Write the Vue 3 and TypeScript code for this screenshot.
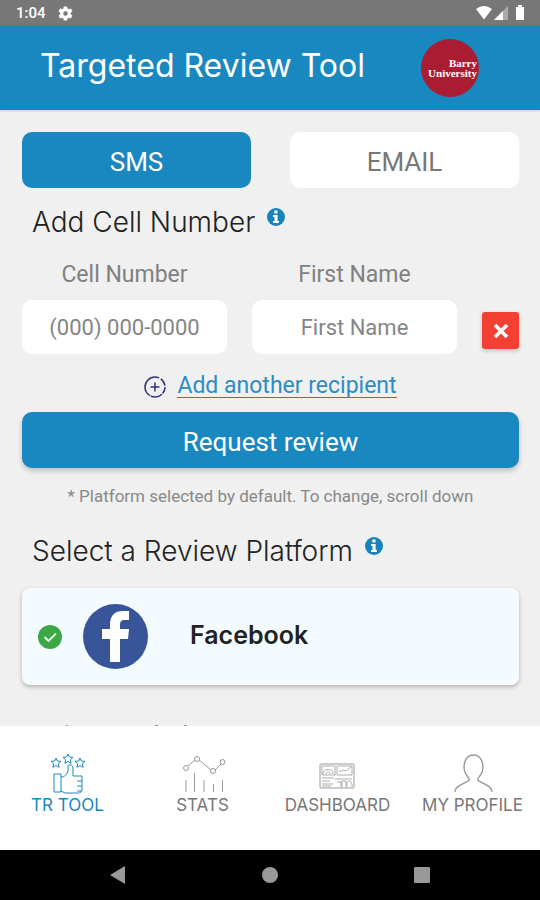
<script setup lang="ts">
import { ref } from 'vue'

interface Recipient {
  id: number
  phone: string
  name: string
}

type Channel = 'SMS' | 'EMAIL'
type Icon = 'tool' | 'stats' | 'dashboard' | 'profile'

const channels: Channel[] = ['SMS', 'EMAIL']
const channel = ref<Channel>('SMS')
const platform = ref('facebook')
const recipients = ref<Recipient[]>([{ id: 1, phone: '', name: '' }])
let nextId = 2

const links: { label: string; icon: Icon; active: boolean }[] = [
  { label: 'TR TOOL', icon: 'tool', active: true },
  { label: 'STATS', icon: 'stats', active: false },
  { label: 'DASHBOARD', icon: 'dashboard', active: false },
  { label: 'MY PROFILE', icon: 'profile', active: false },
]

function addRecipient(): void {
  recipients.value.push({ id: nextId++, phone: '', name: '' })
}

function removeRecipient(id: number): void {
  recipients.value = recipients.value.filter((r) => r.id !== id)
}
</script>

<template>
  <div class="app">
    <div class="status">
      <span class="clock">1:04</span>
      <svg class="gear" viewBox="0 0 24 24" width="17" height="17">
        <path fill="#fff" fill-rule="evenodd" d="M19.4 13a7.500 7.500 0 0 0 0-2l2.200-1.700a.5.5 0 0 0 .1-.6l-2-3.500a.5.5 0 0 0-.6-.2l-2.600 1a8 8 0 0 0-1.700-1L14.400 2.400a.5.5 0 0 0-.5-.4h-4a.5.5 0 0 0-.5.4L9 5a8 8 0 0 0-1.700 1l-2.500-1a.5.5 0 0 0-.6.200l-2 3.500a.5.5 0 0 0 .1.600L4.500 11a8 8 0 0 0 0 2l-2.200 1.700a.5.5 0 0 0-.1.600l2 3.500c.1.200.4.300.6.200l2.500-1a8 8 0 0 0 1.700 1l.4 2.600c0 .2.200.4.500.4h4c.3 0 .5-.2.500-.4l.4-2.600a8 8 0 0 0 1.700-1l2.500 1c.2.100.5 0 .6-.2l2-3.500a.5.5 0 0 0-.1-.6zM12 15.200a3.200 3.200 0 1 1 0-6.400 3.200 3.200 0 0 1 0 6.400z" />
      </svg>
      <svg class="signals" viewBox="0 0 50 18" width="50" height="18">
        <path fill="#fff" d="M0 5Q8-1 16 5L8 15.500z" />
        <path fill="#aaa" d="M32 2v14H18z" />
        <path fill="#fff" d="M27 7v9h-9z" />
        <path fill="#fff" d="M40 3h2V1h4v2h2v13h-8z" />
      </svg>
    </div>

    <header class="header">
      <h1>Targeted Review Tool</h1>
      <div class="brand"><span>Barry</span><span>University</span></div>
    </header>

    <main class="content">
      <div class="channels">
        <button
          v-for="c in channels"
          :key="c"
          type="button"
          class="channel"
          :class="{ selected: channel === c }"
          @click="channel = c"
        >{{ c }}</button>
      </div>

      <h2>
        Add Cell Number
        <svg class="info" viewBox="0 0 18 18" width="18" height="18">
          <circle cx="9" cy="9" r="9" fill="#1782bb" />
          <path fill="#fff" d="M7.300 2.600h3.200v3H7.300zM6 7h4.600v6H12v2H6v-2h1.500V9H6z" />
        </svg>
      </h2>

      <div v-for="r in recipients" :key="r.id" class="recipient">
        <div class="field">
          <label :for="`phone-${r.id}`">Cell Number</label>
          <input :id="`phone-${r.id}`" v-model="r.phone" type="tel" placeholder="(000) 000-0000" />
        </div>
        <div class="field">
          <label :for="`name-${r.id}`">First Name</label>
          <input :id="`name-${r.id}`" v-model="r.name" type="text" placeholder="First Name" />
        </div>
        <button type="button" class="remove" aria-label="Remove recipient" @click="removeRecipient(r.id)">
          <svg viewBox="0 0 16 16" width="16" height="16">
            <path d="M2 2l12 12M14 2L2 14" stroke="#fff" stroke-width="3.600" />
          </svg>
        </button>
      </div>

      <div class="add">
        <svg viewBox="0 0 22 22" width="22" height="22" fill="none" stroke="#2b3575">
          <circle cx="11" cy="11" r="10" stroke-width="1.500" stroke-dasharray="7 1 12 1 30 2 8 2" />
          <path d="M11 6.500v9M6.500 11h9" stroke-width="1.500" />
        </svg>
        <a href="#" @click.prevent="addRecipient">Add another recipient</a>
      </div>

      <button type="button" class="request">Request review</button>
      <p class="note">* Platform selected by default. To change, scroll down</p>

      <h2>
        Select a Review Platform
        <svg class="info" viewBox="0 0 18 18" width="18" height="18">
          <circle cx="9" cy="9" r="9" fill="#1782bb" />
          <path fill="#fff" d="M7.300 2.600h3.200v3H7.300zM6 7h4.600v6H12v2H6v-2h1.500V9H6z" />
        </svg>
      </h2>

      <label class="platform">
        <input v-model="platform" type="radio" name="platform" value="facebook" />
        <svg class="check" viewBox="0 0 24 24" width="24" height="24">
          <circle cx="12" cy="12" r="12" fill="#3ba745" />
          <path d="M6.500 12l4 4 7.500-7.500" fill="none" stroke="#e8ffe8" stroke-width="1.800" />
        </svg>
        <svg class="facebook" viewBox="0 0 65 65" width="65" height="65">
          <circle cx="32.500" cy="32.500" r="32.500" fill="#38559a" />
          <path fill="#fff" d="M27 58V35h-8V25h8v-4C27 11 32 7 40 7h6v9h-4c-4 0-5 2-5 5v4h9l-1 10h-8v23z" />
        </svg>
        <span>Facebook</span>
      </label>

      <svg class="peek" viewBox="0 0 130 2" width="130" height="2" fill="#999" aria-hidden="true">
        <path d="M1 1h2v1H1zM90 1h3v1h-3zM119 1h3v1h-3z" />
      </svg>
    </main>

    <nav class="nav">
      <a v-for="l in links" :key="l.label" href="#" :class="{ active: l.active }">
        <svg viewBox="0 0 40 40" width="40" height="40" fill="none" stroke="currentColor">
          <template v-if="l.icon === 'tool'">
            <path d="M6 20h7v18H6zM13 23c4 0 6-3 7-6v-4c0-3 5-3 5 1v8h9v5h-5m5 0v5h-5m5 0v5h-5m4 0v1c-1 1-2 1-3 1H17l-4-2" />
            <path d="M8 4l1.400 3 3.600.3-2.700 2.500.8 3.500L8 11.500l-3.100 1.800.8-3.500L3 7.300l3.600-.3zM20 0l1.400 3 3.600.3-2.700 2.500.8 3.500L20 7.500l-3.100 1.800.8-3.500L15 3.300l3.600-.3zM32 4l1.400 3 3.600.3-2.700 2.500.8 3.500L32 11.500l-3.100 1.800.8-3.500L27 7.300l3.600-.3z" />
          </template>
          <template v-else-if="l.icon === 'stats'">
            <circle cx="3" cy="14" r="2.500" /><circle cx="14" cy="5" r="2.500" />
            <circle cx="30" cy="17" r="2.500" /><circle cx="39.500" cy="8" r="2.500" />
            <path d="M5 12l7-6M16 6l12 10M32 16l6-6M3 26v12M11.500 19v19M21 26v12M30.500 30v8M39.500 26v12" />
          </template>
          <template v-else-if="l.icon === 'dashboard'">
            <rect x="2" y="10" width="34" height="24" rx="1" />
            <path stroke-width=".8" d="M4 12h13v9H4zM19 12h15v9H19zM5 20c0-6 10-6 10 0M8 20c0-3 4-3 4 0M21 18l4-2 3 1 5-4M4 24h12M4 27h8M4 30h11M4 32h9M17 25h17M19 28h4v5M24 33v-6h4v6M29 33c-2-8 6-8 5 0" />
          </template>
          <path v-else stroke-width="1.400" d="M2 38c0-6 8-8 13-11 2-1 1-3 0-4-7-8-4-22 5.500-22s12.500 14 5.500 22c-1 1-2 3 0 4 5 3 13 5 13 11" />
        </svg>
        <span>{{ l.label }}</span>
      </a>
    </nav>

    <div class="system">
      <button type="button" aria-label="Back">
        <svg viewBox="0 0 18 18" width="18" height="18"><path fill="#999" d="M1 9L16 0v18z" /></svg>
      </button>
      <button type="button" aria-label="Home">
        <svg viewBox="0 0 18 18" width="18" height="18"><circle cx="9" cy="9" r="8" fill="#999" /></svg>
      </button>
      <button type="button" aria-label="Recent apps">
        <svg viewBox="0 0 18 18" width="18" height="18"><rect x="1" y="1" width="16" height="16" rx="1" fill="#999" /></svg>
      </button>
    </div>
  </div>
</template>

<style>
body {
  margin: 0;
  background: #f0f0f0;
}
</style>

<style scoped>
.app {
  display: flex;
  flex-direction: column;
  min-height: 100vh;
  background: #f0f0f0;
  font-family: Roboto, "Liberation Sans", sans-serif;
}

button,
input {
  box-sizing: border-box;
  margin: 0;
  border: 0;
  font-family: inherit;
}

svg {
  flex: none;
  display: block;
  overflow: visible;
}

.status {
  display: flex;
  align-items: center;
  height: 26px;
  padding: 0 14px 0 16px;
  background: #777;
  color: #fff;
}

.clock {
  font-size: 15px;
  font-weight: 500;
}

.gear {
  margin-left: 11px;
}

.signals {
  margin-left: auto;
}

.header {
  display: flex;
  align-items: center;
  justify-content: space-between;
  height: 84px;
  padding: 0 61px 0 40px;
  background: #1a88c0;
  box-shadow: 0 1px 2px rgba(0, 0, 0, 0.15);
}

h1,
h2,
.platform,
.nav {
  font-family: Inter, "Liberation Sans", sans-serif;
}

h1 {
  margin: 0 0 4px;
  color: #fff;
  font-size: 32px;
  font-weight: 400;
  line-height: 40px;
}

.brand {
  display: flex;
  flex-direction: column;
  align-items: flex-end;
  justify-content: center;
  box-sizing: border-box;
  width: 58px;
  height: 58px;
  padding-right: 2px;
  border-radius: 50%;
  background: #a91c32;
  color: #fff;
  font: bold 11px/10px "Liberation Serif", serif;
}

.content {
  flex: 1;
  display: flex;
  flex-direction: column;
  padding: 22px 21px 0 22px;
}

.channels {
  display: grid;
  grid-template-columns: 1fr 1fr;
  gap: 39px;
}

.channel {
  height: 56px;
  padding-top: 4px;
  border-radius: 10px;
  background: #fff;
  color: #777;
  font-size: 26px;
}

.channel.selected {
  background: #1a88c0;
  color: #fff;
}

h2 {
  display: flex;
  gap: 12px;
  margin: 14px 0 0 10px;
  color: #222;
  font-size: 28px;
  font-weight: 300;
  line-height: 40px;
}

.info {
  margin-top: 6px;
}

.recipient {
  display: grid;
  grid-template-columns: 1fr 1fr 37px;
  align-items: end;
  gap: 25px;
  margin-top: 17px;
}

.field {
  display: flex;
  flex-direction: column;
  gap: 9px;
  min-width: 0;
}

.field label {
  color: #808080;
  font-size: 23px;
  line-height: 32px;
  text-align: center;
}

.field input {
  width: 100%;
  height: 54px;
  border-radius: 10px;
  background: #fff;
  color: #555;
  font-size: 22px;
  text-align: center;
}

.field input::placeholder {
  color: #858585;
  opacity: 1;
}

.remove {
  display: grid;
  place-items: center;
  height: 37px;
  margin-bottom: 5px;
  padding: 0;
  border-radius: 3px;
  background: #f44032;
  box-shadow: 0 2px 4px rgba(0, 0, 0, 0.2);
}

.add {
  display: flex;
  align-items: center;
  justify-content: center;
  gap: 11px;
  margin: 21px 0 14px;
}

.add a {
  border-bottom: 1px solid #1a88c0;
  color: #2f8cc0;
  font-size: 23px;
  line-height: 22px;
  text-decoration: none;
}

.request {
  height: 56px;
  padding-top: 4px;
  border-radius: 10px;
  background: #1a88c0;
  box-shadow: 0 3px 5px rgba(0, 0, 0, 0.2);
  color: #fff;
  font-size: 26px;
}

.note {
  margin: 16px 0 9px;
  color: #888;
  font-size: 17px;
  line-height: 24px;
  text-align: center;
}

.platform {
  display: flex;
  align-items: center;
  height: 97px;
  margin-top: 17px;
  padding-left: 16px;
  border-radius: 8px;
  background: #f3fbff;
  box-shadow: 0 2px 4px rgba(0, 0, 0, 0.25);
  color: #222;
  font-size: 25px;
  font-weight: 600;
}

.platform input {
  appearance: none;
  width: 0;
  height: 0;
}

.platform input:not(:checked) + .check {
  visibility: hidden;
}

.platform span {
  padding-bottom: 4px;
}

.facebook {
  margin: 0 42px 0 21px;
}

.peek {
  margin: auto 0 0 43px;
}

.nav {
  display: grid;
  grid-template-columns: repeat(4, 1fr);
  box-sizing: border-box;
  height: 124px;
  padding-top: 28px;
  background: #fff;
}

.nav a {
  display: flex;
  flex-direction: column;
  align-items: center;
  color: #999;
  font-size: 17px;
  line-height: 22px;
  text-decoration: none;
  white-space: nowrap;
}

.nav span {
  color: #777;
}

.nav .active,
.nav .active span {
  color: #1a88c0;
}

.system {
  display: flex;
  align-items: center;
  justify-content: space-around;
  height: 50px;
  padding: 0 42px;
  background: #000;
}

.system button {
  padding: 0;
  background: none;
}
</style>
